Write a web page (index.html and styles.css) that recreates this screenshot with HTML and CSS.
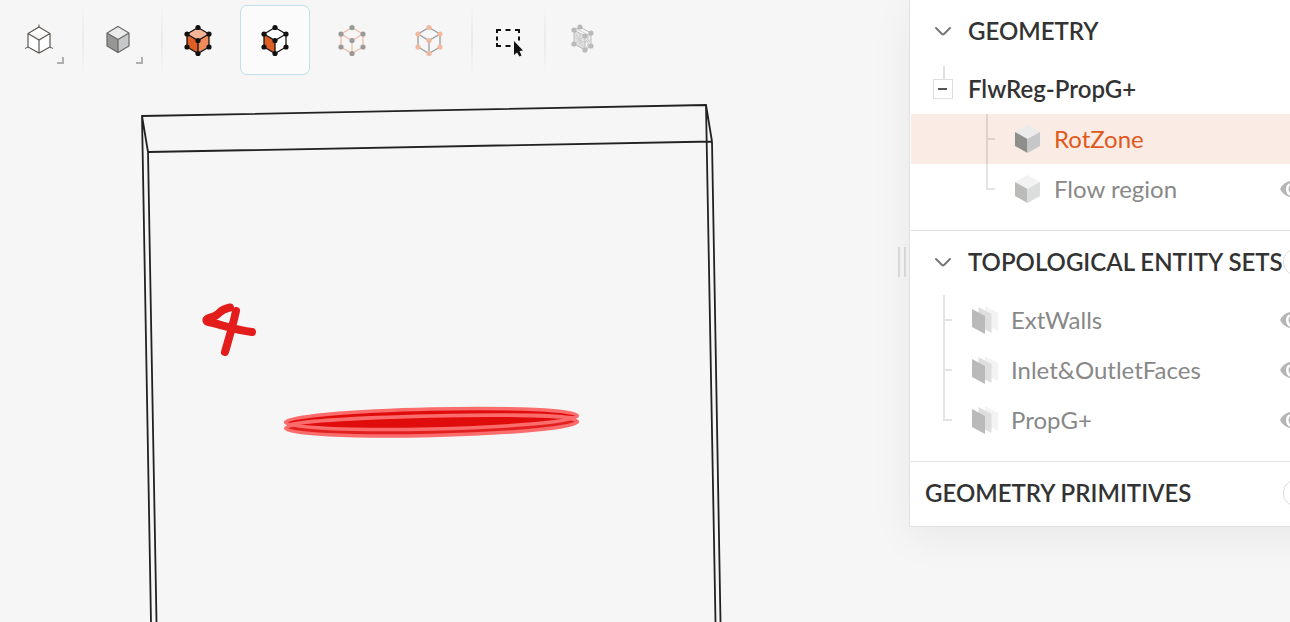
FILE: index.html
```html
<!DOCTYPE html>
<html lang="en-us">

<head>
<meta charset="utf-8">
<title>Geometry</title>
<link rel="stylesheet" href="styles.css">
</head>

<body>
    <!-- shared icons -->
    <svg class="defs" aria-hidden="true">
        <symbol id="cubeEdges" viewBox="0 0 36 36">
            <path d="M18 5.500 29 12V25L18 31.500 7 25V12ZM7 12 18 18.500 29 12M18 18.500V31.500"/>
        </symbol>
        <symbol id="cubeNodes" viewBox="0 0 36 36">
            <circle cx="18" cy="5.500" r="2.600"/><circle cx="29" cy="12" r="2.600"/><circle cx="29" cy="25" r="2.600"/>
            <circle cx="18" cy="31.500" r="2.600"/><circle cx="7" cy="25" r="2.600"/><circle cx="7" cy="12" r="2.600"/>
            <circle cx="18" cy="18.500" r="2.600"/>
        </symbol>
        <symbol id="solid" viewBox="0 0 28 28">
            <path fill="#ebebeb" d="M13.500 0 26 7 13.500 14 1 7Z"/>
            <path fill="#8e8e8d" d="M1 7 13.500 14V28L1 21Z"/>
            <path fill="#c6c7c8" d="M26 7 13.500 14V28L26 21Z"/>
        </symbol>
        <symbol id="faces" viewBox="0 0 28 28">
            <path fill="#f3f3f3" d="M14 0 27 7V25L14 18Z"/>
            <path fill="#dedede" d="M7.500 1 20.500 8V27L7.500 20Z"/>
            <path fill="#bababa" d="M1 3 14 10V28L1 21Z"/>
        </symbol>
        <symbol id="eye" viewBox="0 0 28 20">
            <path fill="#b5b5b5" fill-rule="evenodd" d="M1 10C6-1 22-1 27 10 22 21 6 21 1 10ZM7 10Q7 16 12 17 8.500 10 12 4 7 5 7 10Z"/>
            <circle cx="14" cy="10" r="4.500" fill="#b5b5b5"/>
        </symbol>
        <symbol id="chevron" viewBox="0 0 20 20">
            <path fill="none" stroke="#777" stroke-width="2" stroke-linecap="round" stroke-linejoin="round" d="M3 7 9 13Q10 13.800 11 13L17 7"/>
        </symbol>
    </svg>

    <main class="viewport">
        <div class="toolbar" role="toolbar" aria-label="View and selection">
            <button class="tool" aria-label="View orientation">
                <svg viewBox="0 0 36 36"><path fill="#fff" stroke="#5c5651" stroke-width="1.200" d="M17 5 28 11.500V25L17 31 6 25V11.500ZM6 11.500 17 18 28 11.500M17 18V31"/><path stroke="#5c5651" d="M17 5V2.500M6 25 3 26.500M28 25 31 26.500"/></svg>
                <span class="corner"></span>
            </button>
            <span class="separator"></span>
            <button class="tool" aria-label="Render mode">
                <svg viewBox="0 0 36 36">
                    <path fill="#ebebeb" d="M17 4.500 28 11 17 17.500 6 11Z"/>
                    <path fill="#969693" d="M6 11 17 17.500V30.500L6 24Z"/>
                    <path fill="#c6c9c9" d="M28 11 17 17.500V30.500L28 24Z"/>
                    <path fill="none" stroke="#686868" stroke-width="1.200" d="M17 4.500 28 11V24L17 30.500 6 24V11ZM6 11 17 17.500 28 11M17 17.500V30.500"/>
                </svg>
                <span class="corner"></span>
            </button>
            <span class="separator"></span>
            <button class="tool" aria-label="Pick volumes">
                <svg viewBox="0 0 36 36">
                    <path fill="#f6b497" d="M18 5.500 29 12 18 18.500 7 12Z"/>
                    <path fill="#de5f25" d="M7 12 18 18.500V31.500L7 25Z"/>
                    <path fill="#f08a59" d="M29 12 18 18.500V31.500L29 25Z"/>
                    <use class="edge-black" href="#cubeEdges"/><use class="node-black" href="#cubeNodes"/>
                </svg>
            </button>
            <button class="tool active" aria-label="Pick faces" aria-pressed="true">
                <svg viewBox="0 0 36 36">
                    <path fill="#fff" d="M18 5.500 29 12V25L18 31.500 7 25V12Z"/>
                    <path fill="#de5f25" d="M7 12 18 18.500V31.500L7 25Z"/>
                    <use class="edge-black" href="#cubeEdges"/><use class="node-black" href="#cubeNodes"/>
                </svg>
            </button>
            <button class="tool" aria-label="Pick edges">
                <svg viewBox="0 0 36 36"><use class="edge-peach" href="#cubeEdges"/><use class="node-gray" href="#cubeNodes"/></svg>
            </button>
            <button class="tool" aria-label="Pick vertices">
                <svg viewBox="0 0 36 36"><use class="edge-gray" href="#cubeEdges"/><use class="node-peach" href="#cubeNodes"/></svg>
            </button>
            <span class="separator"></span>
            <button class="tool" aria-label="Box selection">
                <svg viewBox="0 0 36 36">
                    <path fill="none" stroke="#111" stroke-width="2" d="M7 11V8H11M15.500 8H20.500M25 8H29V11M7 14.500V18.500M29 14.500V18.500M7 21V24H11M15.500 24H20.500"/>
                    <path fill="#111" d="M24 19V33L27 30.500 29.500 34.500 31.500 33.500 29.500 29 33 28.500Z"/>
                </svg>
            </button>
            <span class="separator tight"></span>
            <button class="tool" aria-label="Pick mesh">
                <svg viewBox="-4 0 36 36">
                    <path fill="#e2e2e2" d="M5 8 16 14V28L5 22Z"/>
                    <path fill="none" stroke="#bcbcbc" d="M11 5 22 11V24L16 28 5 22V8L11 5M5 8 16 14 22 11M16 14V28"/>
                    <path fill="none" stroke="#c8c8c8" stroke-width=".8" d="M8 7 19 13V26M11 11V25M5 15 16 21 22 17M5 22 16 14M5 8 16 28M16 21 22 11M16 28 22 17"/>
                    <g fill="#bababa"><circle cx="11" cy="5" r="2.600"/><circle cx="5" cy="8" r="2.600"/><circle cx="22" cy="11" r="2.600"/><circle cx="16" cy="14" r="2.600"/><circle cx="5" cy="22" r="2.600"/><circle cx="22" cy="24" r="2.600"/><circle cx="16" cy="28" r="2.600"/></g>
                </svg>
            </button>
        </div>

        <!-- 3D scene: flow region box and the rotating zone disk -->
        <svg class="scene" viewBox="0 80 898 542" preserveAspectRatio="xMinYMin slice" role="img" aria-label="Model">
            <path fill="none" stroke="#222" stroke-width="1.800" stroke-linejoin="round" d="M151 622 142 116 706 105 715.500 622M156.500 622 148 152 712 141.500 720.500 622M142 116 148 152M706 105 712 141.500"/>
            <g transform="rotate(-1.300 431.500 422)" stroke="#fb6c6c" stroke-width="3.500">
                <ellipse cx="431.500" cy="425" rx="146" ry="10.500" fill="#e32020"/>
                <ellipse cx="431.500" cy="419" rx="146" ry="10" fill="#e00c0c"/>
                <path fill="none" d="M287 422C320 414 543 414 576 422"/>
            </g>
            <path fill="none" stroke="#e31c1c" stroke-width="8" stroke-linecap="round" stroke-linejoin="round" d="M252 332C236 330 222 325 207 321.500 204 317 214 319 219 313 224 308 228 308 230 307.500M236 311C233 325 229 338 225 352"/>
        </svg>
    </main>

    <div class="splitter" role="separator"></div>

    <aside class="panel">
        <section class="group">
            <div class="group-header">
                <button class="toggle" aria-label="Collapse geometry"><svg><use href="#chevron"/></svg></button>
                <h2>GEOMETRY</h2>
            </div>
            <div class="row root">
                <button class="toggle" aria-label="Collapse FlwReg-PropG+"><svg viewBox="0 0 20 20"><path stroke="#e0e0e0" stroke-width="2" d="M11 -13V0"/><rect x=".5" y=".5" width="19" height="19" fill="#fff" stroke="#ddd"/><path stroke="#555" stroke-width="2" d="M5 10H14"/></svg></button>
                <span>FlwReg-PropG+</span>
            </div>
            <div class="row child selected">
                <span class="branch"></span>
                <svg class="icon"><use href="#solid"/></svg>
                <span>RotZone</span>
            </div>
            <div class="row child">
                <span class="branch last"></span>
                <svg class="icon faded"><use href="#solid"/></svg>
                <span>Flow region</span>
                <button class="eye" aria-label="Show Flow region"><svg><use href="#eye"/></svg></button>
            </div>
        </section>

        <section class="group">
            <div class="group-header">
                <button class="toggle" aria-label="Collapse topological entity sets"><svg><use href="#chevron"/></svg></button>
                <h2>TOPOLOGICAL ENTITY SETS</h2>
                <span class="count"></span>
            </div>
            <div class="row">
                <span class="branch"></span>
                <svg class="icon"><use href="#faces"/></svg>
                <span>ExtWalls</span>
                <button class="eye" aria-label="Show ExtWalls"><svg><use href="#eye"/></svg></button>
            </div>
            <div class="row">
                <span class="branch"></span>
                <svg class="icon"><use href="#faces"/></svg>
                <span>Inlet&amp;OutletFaces</span>
                <button class="eye" aria-label="Show Inlet&amp;OutletFaces"><svg><use href="#eye"/></svg></button>
            </div>
            <div class="row">
                <span class="branch last"></span>
                <svg class="icon"><use href="#faces"/></svg>
                <span>PropG+</span>
                <button class="eye" aria-label="Show PropG+"><svg><use href="#eye"/></svg></button>
            </div>
        </section>

        <section class="group">
            <div class="group-header plain">
                <h2>GEOMETRY PRIMITIVES</h2>
                <span class="count"></span>
            </div>
        </section>
    </aside>
</body>
</html>
```

FILE: styles.css
```css
* {
    box-sizing: border-box;
}
body {
    margin: 0;
    height: 100vh;
    overflow: hidden;
    display: grid;
    grid-template-columns: 1fr 11px 381px;
    background-color: #f6f6f6;
    font-family: Lato, "Liberation Sans", sans-serif;
    font-size: 24px;
    line-height: 30px;
    text-rendering: optimizeLegibility;
    color: #333;
}
button {
    padding: 0;
    border: none;
    background: none;
    cursor: pointer;
}
svg {
    display: block;
}
.defs {
    position: absolute;
    width: 0;
    height: 0;
}

/* Viewport */
.viewport {
    display: flex;
    flex-direction: column;
    min-width: 0;
    height: 100vh;
}
.toolbar {
    display: flex;
    gap: 7px;
    height: 80px;
    padding: 5px;
}
.tool {
    position: relative;
    flex: none;
    display: flex;
    align-items: center;
    justify-content: center;
    width: 70px;
    height: 70px;
    border: 1px solid transparent;
    border-radius: 7px;
}
.tool svg {
    width: 36px;
    height: 36px;
}
.tool:hover,
.tool.active {
    background-color: #fbfbfb;
    border-color: #c3dfeb;
}
.corner {
    position: absolute;
    right: 10px;
    bottom: 10px;
    width: 7px;
    height: 7px;
    border: solid #b0b0b0;
    border-width: 0 2px 2px 0;
}
.separator {
    flex: none;
    width: 2px;
    margin-right: -7px;
    background: linear-gradient(#f6f6f6, #e9e9e9 50%, #f6f6f6);
}
.separator.tight {
    margin: 0 -5px 0 -6px;
}
.edge-black, .edge-gray, .edge-peach {
    fill: none;
    stroke-width: 1.3px;
}
.edge-black { stroke: #111; }
.edge-gray { stroke: #999; }
.edge-peach { stroke: #f2bca5; }
.node-black { fill: #111; }
.node-gray { fill: #999; }
.node-peach { fill: #f0b9a1; }
.scene {
    flex: 1;
    width: 100%;
    min-height: 0;
}

.splitter {
    align-self: start;
    width: 8px;
    height: 30px;
    margin-top: 247px;
    border: solid #dcdcdc;
    border-width: 0 2px;
    cursor: col-resize;
}

/* Side panel, runs past the right edge of the window */
.panel {
    align-self: start;
    width: 441px;
    padding-left: 1px;
    border: 1px solid #e1e1e1;
    border-top: none;
    background-color: #fff;
    box-shadow: 0 10px 40px rgba(0, 0, 0, 0.06);
}
.group {
    padding-bottom: 16px;
    border-bottom: 1px solid #e1e1e1;
}
.group:last-child {
    padding-bottom: 0;
    border-bottom: none;
}
.group-header {
    display: flex;
    align-items: center;
    height: 62px;
    margin-bottom: 2px;
    padding: 0 42px 0 22px;
}
.group-header.plain {
    padding-left: 14px;
}
.group-header h2 {
    margin: 0;
    font-size: 24px;
    font-weight: 600;
    white-space: nowrap;
}
.toggle {
    margin-right: 15px;
}
.toggle,
.toggle svg {
    width: 20px;
    height: 20px;
    overflow: visible;
}
.count {
    flex: none;
    width: 24px;
    height: 26px;
    margin-left: auto;
    border: 1px solid #ddd;
    border-radius: 13px;
}
.row {
    display: flex;
    align-items: center;
    gap: 12px;
    height: 50px;
    padding: 0 42px 0 32px;
    color: #888;
}
.row.root {
    gap: 0;
    padding-left: 22px;
    font-weight: 600;
    color: #333;
}
.row.child {
    padding-left: 75px;
}
.row.selected {
    background-color: #faece5;
    color: #e0591c;
}
.branch {
    align-self: stretch;
    width: 9px;
    margin-right: 7px;
    background:
        linear-gradient(rgba(0, 0, 0, 0.11), rgba(0, 0, 0, 0.11)) 0 0 / 2px 100% no-repeat,
        linear-gradient(rgba(0, 0, 0, 0.11), rgba(0, 0, 0, 0.11)) 2px 50% / 7px 2px no-repeat;
}
.branch.last {
    background-size: 2px 26px, 7px 2px;
}
.icon {
    flex: none;
    width: 28px;
    height: 28px;
}
.icon.faded {
    opacity: 0.6;
}
.eye {
    margin-left: auto;
}
.eye svg {
    width: 28px;
    height: 20px;
}
```
